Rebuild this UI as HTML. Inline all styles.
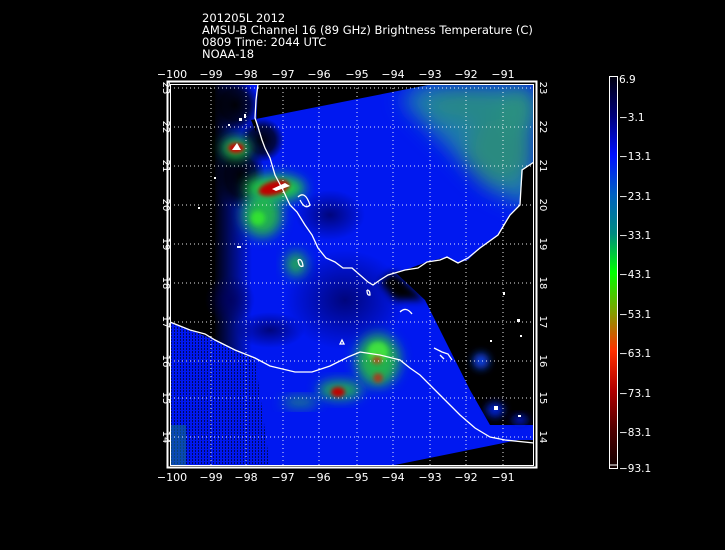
<!DOCTYPE html>
<html><head><meta charset="utf-8"><style>
html,body{margin:0;padding:0;background:#000;width:725px;height:550px;overflow:hidden}
svg{display:block}
text{font-family:"DejaVu Sans","Liberation Sans",sans-serif;fill:#fff}
</style></head><body>
<svg width="725" height="550" viewBox="0 0 725 550" xmlns="http://www.w3.org/2000/svg">
<defs>
<clipPath id="c"><rect x="170" y="84" width="364" height="382"/></clipPath>
<filter id="b10" x="-50%" y="-50%" width="200%" height="200%"><feGaussianBlur stdDeviation="10"/></filter>
<filter id="b6" x="-50%" y="-50%" width="200%" height="200%"><feGaussianBlur stdDeviation="6"/></filter>
<filter id="b4" x="-50%" y="-50%" width="200%" height="200%"><feGaussianBlur stdDeviation="4"/></filter>
<filter id="b2" x="-50%" y="-50%" width="200%" height="200%"><feGaussianBlur stdDeviation="2"/></filter>
<linearGradient id="lb" x1="0" y1="0" x2="1" y2="0">
<stop offset="0" stop-color="#000" stop-opacity="1"/><stop offset="0.55" stop-color="#000" stop-opacity="0.95"/><stop offset="1" stop-color="#000" stop-opacity="0"/></linearGradient>
<radialGradient id="dk"><stop offset="0" stop-color="#000" stop-opacity="0.95"/><stop offset="0.6" stop-color="#000" stop-opacity="0.7"/><stop offset="1" stop-color="#000" stop-opacity="0"/></radialGradient>
<radialGradient id="nv"><stop offset="0" stop-color="#000060" stop-opacity="0.8"/><stop offset="1" stop-color="#000060" stop-opacity="0"/></radialGradient>
<linearGradient id="cb" x1="0" y1="0" x2="0" y2="1">
<stop offset="0" stop-color="#000010"/><stop offset="0.1" stop-color="#00007a"/><stop offset="0.2" stop-color="#0010ff"/>
<stop offset="0.3" stop-color="#0060c0"/><stop offset="0.4" stop-color="#008a80"/><stop offset="0.5" stop-color="#00ff00"/>
<stop offset="0.6" stop-color="#80a000"/><stop offset="0.7" stop-color="#ff3000"/><stop offset="0.8" stop-color="#b00000"/>
<stop offset="0.9" stop-color="#500000"/><stop offset="1" stop-color="#100000"/></linearGradient>
<pattern id="hat" width="3" height="3" patternUnits="userSpaceOnUse"><rect width="1" height="2" fill="#000" opacity="0.6"/></pattern>
</defs>
<g font-size="11.5">
<text x="202" y="22">201205L 2012</text>
<text x="202" y="34">AMSU-B Channel 16 (89 GHz) Brightness Temperature (C)</text>
<text x="202" y="46">0809 Time: 2044 UTC</text>
<text x="202" y="58">NOAA-18</text>
</g>
<g clip-path="url(#c)">
<rect x="170" y="84" width="364" height="382" fill="#0018f0"/>
<g filter="url(#b10)">
<polygon points="420,84 534,84 534,210 490,190 440,140 400,100" fill="#1a78b0"/>
<ellipse cx="500" cy="150" rx="35" ry="35" fill="#2a8a80"/>
<ellipse cx="470" cy="105" rx="45" ry="18" fill="#258888"/>
<ellipse cx="520" cy="110" rx="20" ry="25" fill="#2a9080"/>
</g>
<!-- dark areas -->
<polygon points="170,84 252,84 252,358 235,350 215,340 190,330 170,322" fill="url(#lb)"/>
<polygon points="170,84 215,84 215,338 190,330 170,322" fill="#000"/>
<ellipse cx="240" cy="175" rx="25" ry="35" fill="url(#dk)"/>
<ellipse cx="262" cy="140" rx="22" ry="22" fill="url(#dk)"/>
<ellipse cx="235" cy="105" rx="25" ry="25" fill="url(#dk)"/>
<ellipse cx="345" cy="300" rx="60" ry="50" fill="url(#nv)"/>
<ellipse cx="270" cy="330" rx="35" ry="18" fill="url(#nv)"/>
<ellipse cx="230" cy="300" rx="25" ry="25" fill="url(#nv)"/>
<ellipse cx="330" cy="215" rx="35" ry="25" fill="url(#nv)"/>
<polygon points="170,84 433,84 251,120 256,132 258,84" fill="#000"/>
<path d="M534,162 L523,170 L520,205 L510,215 L498,235 L480,248 L468,260 L458,263 L447,257 L427,262 L405,270 L395,272 L425,300 L440,330 L455,360 L470,390 L490,425 L534,425 Z" fill="#000"/>
<path d="M395,272 L388,275 L380,282 L395,300 L425,300 Z" fill="#000" filter="url(#b4)"/>
<ellipse cx="481" cy="361" rx="8" ry="8" fill="#1040e0" filter="url(#b4)"/>
<ellipse cx="495" cy="410" rx="9" ry="7" fill="#0020d0" filter="url(#b4)"/>
<ellipse cx="520" cy="420" rx="8" ry="5" fill="#0018c0" filter="url(#b4)"/>
<polygon points="390,466 518,440 534,440 534,466" fill="#000"/>
<polygon points="170,322 215,340 255,358 270,466 170,466" fill="url(#hat)"/>
<rect x="170" y="425" width="16" height="41" fill="#0f6a8a" opacity="0.6"/>
<!-- convection -->
<ellipse cx="262" cy="215" rx="20" ry="22" fill="#20b050" filter="url(#b6)"/>
<ellipse cx="296" cy="264" rx="10" ry="12" fill="#20b050" filter="url(#b6)"/>
<ellipse cx="378" cy="360" rx="22" ry="26" fill="#20b050" filter="url(#b6)"/>
<ellipse cx="340" cy="390" rx="22" ry="9" fill="#20b050" filter="url(#b6)"/>
<ellipse cx="300" cy="402" rx="18" ry="5" fill="#1d8a7a" filter="url(#b6)"/>
<ellipse cx="236" cy="148" rx="14" ry="10" fill="#20d040" filter="url(#b6)"/>
<ellipse cx="275" cy="188" rx="30" ry="13" fill="#20d040" filter="url(#b6)"/>
<ellipse cx="258" cy="218" rx="7" ry="7" fill="#30e030" filter="url(#b2)"/>
<ellipse cx="378" cy="352" rx="10" ry="10" fill="#40e040" filter="url(#b2)"/>
<ellipse cx="236" cy="148" rx="8" ry="5" fill="#d00000" filter="url(#b2)"/>
<ellipse cx="274" cy="188" rx="16" ry="7" fill="#c00000" transform="rotate(-15 274 188)" filter="url(#b2)"/>
<ellipse cx="338" cy="392" rx="7" ry="5" fill="#c00000" filter="url(#b2)"/>
<ellipse cx="378" cy="378" rx="5" ry="5" fill="#a04020" filter="url(#b2)"/>
<ellipse cx="377" cy="360" rx="5" ry="4" fill="#a05020" filter="url(#b2)"/>
<polygon points="232,150 237,143 241,150" fill="#fff"/>
<polygon points="272,189 285,183 290,186 276,191" fill="#fff"/>
<g fill="none" stroke="#fff" stroke-width="1.3">
<polyline points="258,84 256,100 255,118 258,127 262,140 265,148 270,158 275,175 283,190 290,205 297,212 305,225 312,235 318,248 326,258 335,262 343,268 352,268 360,275 368,282 373,285 380,280 388,275 405,270 418,268 427,262 440,260 447,257 458,263 468,258 480,248 498,235 510,215 520,205 522,170 534,162"/>
<polyline points="170,322 190,330 205,334 215,340 235,350 255,358 270,366 295,372 312,372 330,366 348,357 360,352 380,355 400,360 410,368 420,375 440,395 460,415 475,428 490,437 505,440 534,443"/>
<path d="M298,197 Q305,190 310,205 Q305,210 300,200"/>
<path d="M298,260 q4,-2 5,6 q-4,2 -5,-6"/>
<path d="M367,290 q3,0 3,5 q-3,1 -3,-5"/>
<path d="M400,312 q6,-6 12,2"/>
<path d="M340,344 l2,-4 l2,4 z"/>
<path d="M434,348 l8,4 l6,2 l4,6"/>
<path d="M440,355 l4,4"/>
</g>
<g fill="#fff">
<rect x="239" y="118" width="3" height="3"/><rect x="244" y="114" width="2" height="4"/><rect x="228" y="124" width="2" height="2"/>
<rect x="214" y="177" width="2" height="2"/><rect x="198" y="207" width="2" height="2"/><rect x="237" y="246" width="4" height="2"/>
<rect x="503" y="292" width="2" height="3"/><rect x="517" y="319" width="3" height="3"/><rect x="490" y="340" width="2" height="2"/>
<rect x="494" y="406" width="4" height="4"/><rect x="518" y="415" width="3" height="2"/><rect x="520" y="335" width="2" height="2"/>
</g>
<g stroke="#fff" stroke-width="1" stroke-dasharray="1,3" opacity="0.9">
<line x1="211" y1="84" x2="211" y2="466"/><line x1="246" y1="84" x2="246" y2="466"/><line x1="283" y1="84" x2="283" y2="466"/>
<line x1="319" y1="84" x2="319" y2="466"/><line x1="357" y1="84" x2="357" y2="466"/><line x1="393" y1="84" x2="393" y2="466"/>
<line x1="430" y1="84" x2="430" y2="466"/><line x1="466" y1="84" x2="466" y2="466"/><line x1="503" y1="84" x2="503" y2="466"/>
<line x1="170" y1="88" x2="534" y2="88"/><line x1="170" y1="127" x2="534" y2="127"/><line x1="170" y1="166" x2="534" y2="166"/>
<line x1="170" y1="205" x2="534" y2="205"/><line x1="170" y1="244" x2="534" y2="244"/><line x1="170" y1="283" x2="534" y2="283"/>
<line x1="170" y1="322" x2="534" y2="322"/><line x1="170" y1="361" x2="534" y2="361"/><line x1="170" y1="398" x2="534" y2="398"/>
<line x1="170" y1="437" x2="534" y2="437"/>
</g>
</g>
<rect x="167.5" y="81.5" width="369" height="386" fill="none" stroke="#fff" stroke-width="2"/>
<rect x="170.5" y="84.5" width="363" height="381" fill="none" stroke="#fff" stroke-width="1"/>
<g font-size="11" text-anchor="middle">
<text x="172" y="78">−100</text><text x="211" y="78">−99</text><text x="246" y="78">−98</text><text x="283" y="78">−97</text><text x="319" y="78">−96</text><text x="357" y="78">−95</text><text x="393" y="78">−94</text><text x="430" y="78">−93</text><text x="466" y="78">−92</text><text x="503" y="78">−91</text>
<text x="172" y="481">−100</text><text x="211" y="481">−99</text><text x="246" y="481">−98</text><text x="283" y="481">−97</text><text x="319" y="481">−96</text><text x="357" y="481">−95</text><text x="393" y="481">−94</text><text x="430" y="481">−93</text><text x="466" y="481">−92</text><text x="503" y="481">−91</text>
</g>
<g font-size="10" text-anchor="middle">
<text transform="translate(163,88) rotate(90)">23</text><text transform="translate(163,127) rotate(90)">22</text><text transform="translate(163,166) rotate(90)">21</text><text transform="translate(163,205) rotate(90)">20</text><text transform="translate(163,244) rotate(90)">19</text><text transform="translate(163,283) rotate(90)">18</text><text transform="translate(163,322) rotate(90)">17</text><text transform="translate(163,361) rotate(90)">16</text><text transform="translate(163,398) rotate(90)">15</text><text transform="translate(163,437) rotate(90)">14</text>
<text transform="translate(540,88) rotate(90)">23</text><text transform="translate(540,127) rotate(90)">22</text><text transform="translate(540,166) rotate(90)">21</text><text transform="translate(540,205) rotate(90)">20</text><text transform="translate(540,244) rotate(90)">19</text><text transform="translate(540,283) rotate(90)">18</text><text transform="translate(540,322) rotate(90)">17</text><text transform="translate(540,361) rotate(90)">16</text><text transform="translate(540,398) rotate(90)">15</text><text transform="translate(540,437) rotate(90)">14</text>
</g>
<rect x="610" y="77" width="7" height="391" fill="url(#cb)"/>
<rect x="609.5" y="76.5" width="8" height="392" fill="none" stroke="#fff" stroke-width="1"/>
<line x1="610" y1="465" x2="617" y2="465" stroke="#fff"/>
<g font-size="10.5">
<text x="619" y="83">6.9</text><text x="619" y="121">−3.1</text><text x="619" y="160">−13.1</text><text x="619" y="200">−23.1</text><text x="619" y="239">−33.1</text><text x="619" y="278">−43.1</text><text x="619" y="318">−53.1</text><text x="619" y="357">−63.1</text><text x="619" y="397">−73.1</text><text x="619" y="436">−83.1</text><text x="619" y="472">−93.1</text>
</g>
</svg>
</body></html>
